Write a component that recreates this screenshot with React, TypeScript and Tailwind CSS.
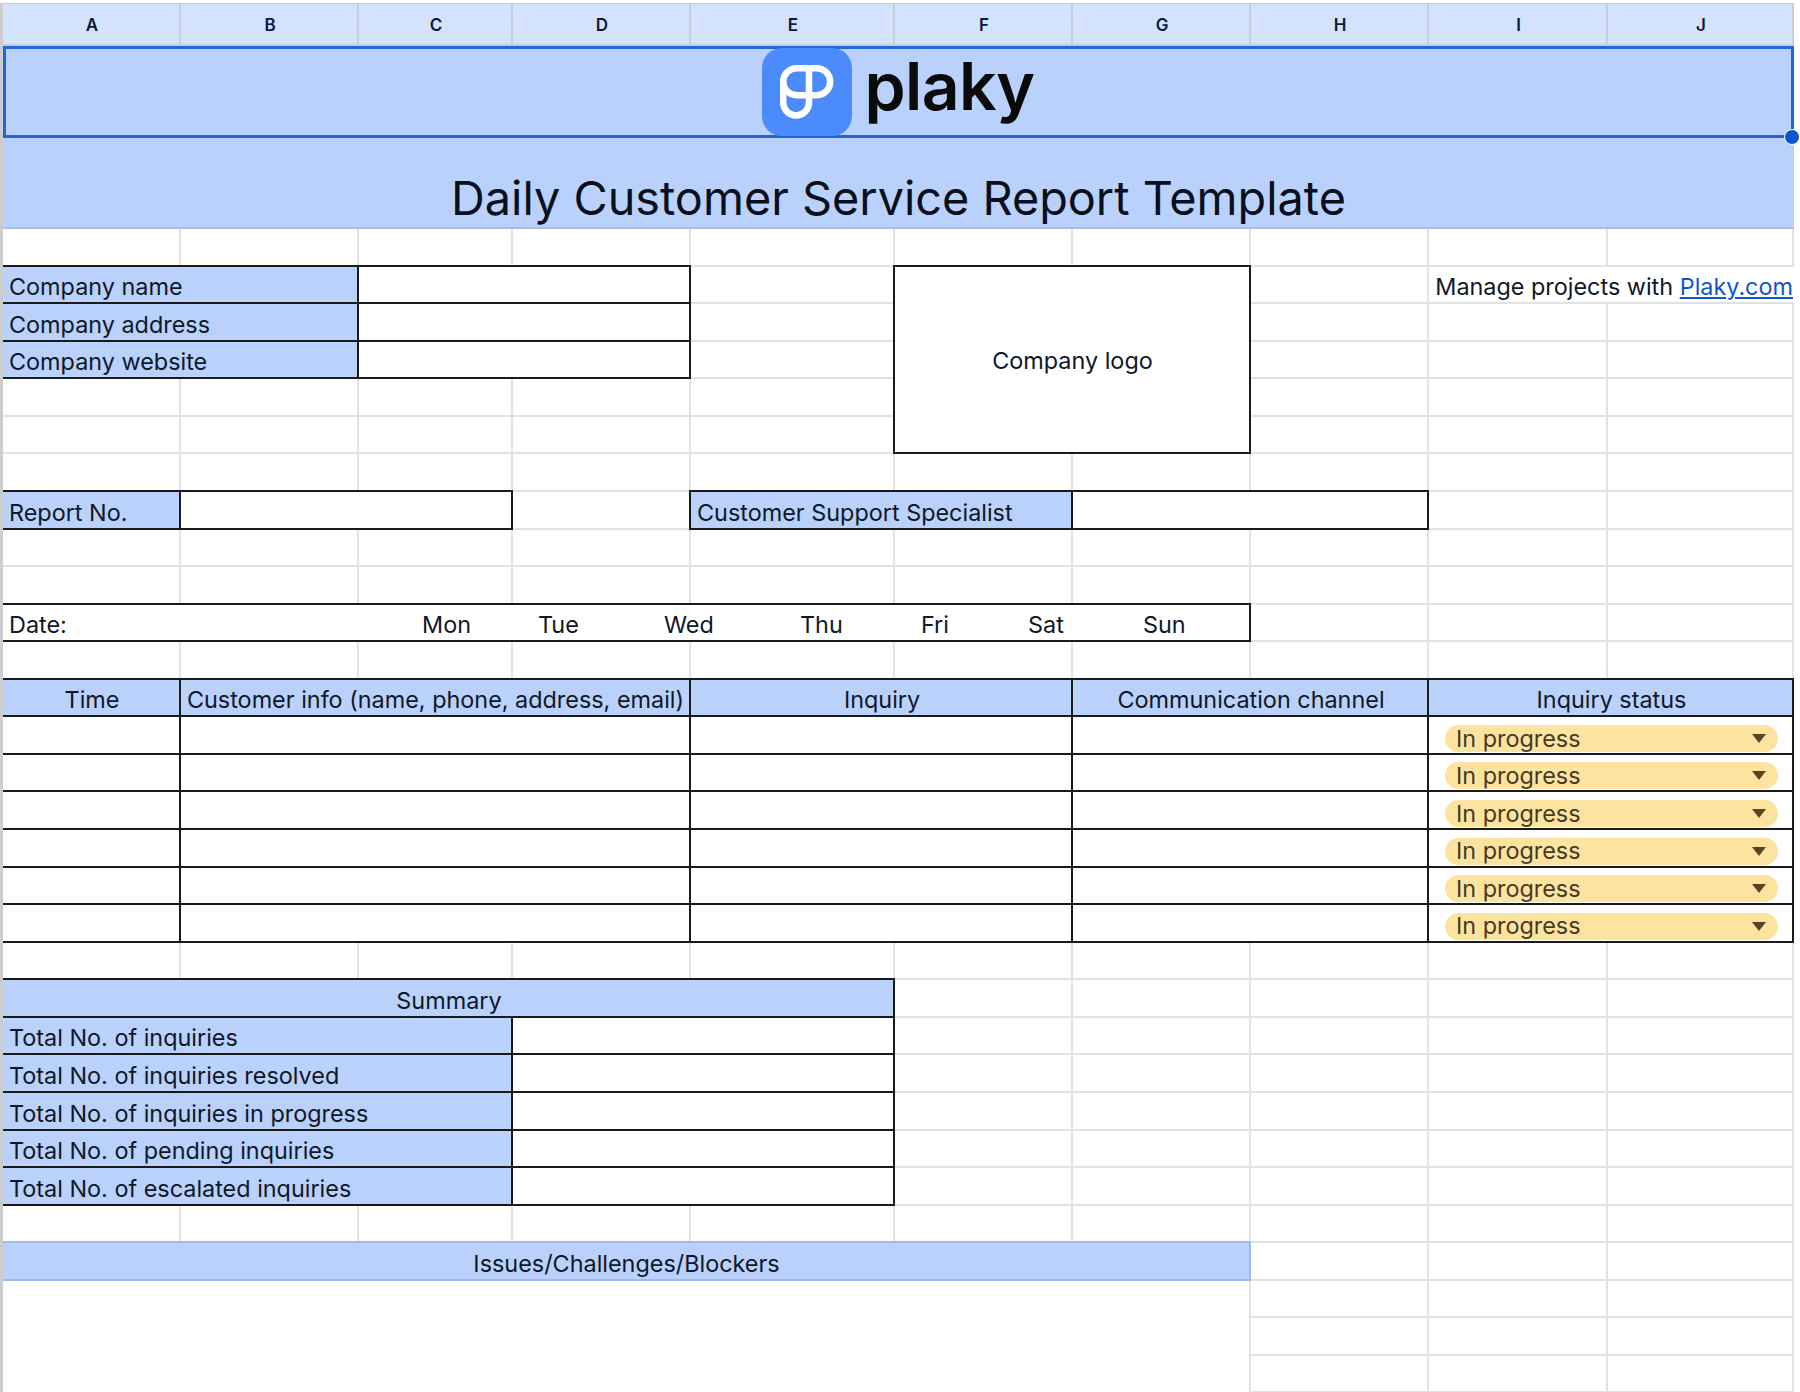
import React from "react";

type CellProps = { tone?: "grid" | "black" | "soft"; c?: string; children?: React.ReactNode };

function Cell({ tone = "grid", c = "", children }: CellProps) {
  const color = tone === "black" ? "border-[#1a1a1a]" : tone === "soft" ? "border-[#a3b9e6]" : "border-[#e2e2e2]";
  return <div className={`flex min-w-0 items-end overflow-hidden whitespace-nowrap border-r-2 border-b-2 leading-[30px] ${color} ${c}`}>{children}</div>;
}

function Blanks({ n }: { n: number }) {
  return <>{Array.from({ length: n }, (_, i) => <Cell key={i} />)}</>;
}

const blue = "bg-[#b9d1fb]";
const top = "-mt-[2px] border-t-2";

function Status() {
  return (
    <div className="col-span-2 flex min-w-0 items-end border-r-2 border-b-2 border-[#1a1a1a] pb-[1px] pl-[16px] pr-[14px]">
      <div className="flex h-[27px] flex-1 items-center justify-between rounded-full bg-[#fde3a0] pl-[11px] pr-[12px] text-[#473a22]">
        <span className="leading-none">In progress</span>
        <svg width="14" height="9" viewBox="0 0 14 9"><path d="M0 0h14L7 9z" fill="#5a4523" /></svg>
      </div>
    </div>
  );
}

function LogoMark() {
  return (
    <div className="flex h-[88px] w-[90px] items-center justify-center rounded-[20px] bg-[#4c8bfb]">
      <svg width="54" height="54" viewBox="0 0 54 54" fill="none" stroke="#fff" strokeWidth="6.5">
        <rect x="3.2" y="3.2" width="47" height="27" rx="13.5" />
        <path d="M3.2 16.7V37.5a12.9 12.9 0 0 0 25.8 0V3.2" />
      </svg>
    </div>
  );
}

export default function App() {
  return (
    <div className="h-[1392px] w-[1800px] overflow-hidden bg-white pt-[3px] font-['Inter','Liberation_Sans',sans-serif] text-[23.4px] text-[#101828]">
      <div className="grid h-[1389px] w-[1794px] grid-cols-[178px_178px_154px_178px_204px_178px_178px_178px_179px_186px] grid-rows-[42px_92px_91px_repeat(31,37.57px)] border-t border-l-[3px] border-[#cdcdcd]">
        {"ABCDEFGHIJ".split("").map((l) => (
          <div key={l} className="flex items-center justify-center border-r-2 border-b-2 border-[#c9ced6] bg-[#d3e3fd] pl-[2px] pt-[3px] text-[17px] font-semibold text-[#0b1a3a]">{l}</div>
        ))}

        <div className="relative col-span-10 flex items-center justify-center gap-[12px] border-[3px] border-[#1f66d8] bg-[#b9d1fb]">
          <LogoMark />
          <span className="pb-[12px] text-[66px] font-semibold leading-none tracking-[-0.6px] text-[#0a0a0a]">plaky</span>
          <div className="absolute -bottom-[10px] -right-[9px] h-[16px] w-[16px] rounded-full border border-white bg-[#0b57d0]" />
        </div>
        <div className="col-span-10 flex items-end justify-center border-b-2 border-[#a9bde6] bg-[#b9d1fb] text-[46.8px] leading-[58px] text-[#0a0f1c]">
          Daily Customer Service Report Template
        </div>

        <Blanks n={10} />

        {/* Company info */}
        <Cell tone="black" c={`col-span-2 pl-[6px] ${blue} ${top}`}>Company name</Cell>
        <Cell tone="black" c={`col-span-2 ${top}`} />
        <Cell />
        <div className="relative z-10 col-span-2 row-span-5 -mt-[2px] -ml-[2px] flex items-center justify-center border-2 border-[#1a1a1a] pl-[1px] pt-[3px]">Company logo</div>
        <Cell />
        <div className="col-span-2 flex items-end justify-end whitespace-nowrap border-b-2 border-[#e2e2e2] pr-[1px] leading-[30px]">
          <span>Manage projects with&nbsp;</span><a className="text-[#1155cc] underline">Plaky.com</a>
        </div>

        <Cell tone="black" c={`col-span-2 pl-[6px] ${blue}`}>Company address</Cell>
        <Cell tone="black" c="col-span-2" />
        <Blanks n={4} />
        <Cell tone="black" c={`col-span-2 pl-[6px] ${blue}`}>Company website</Cell>
        <Cell tone="black" c="col-span-2" />
        <Blanks n={4} />
        <Blanks n={8} />
        <Blanks n={8} />
        <Blanks n={10} />

        {/* Report */}
        <Cell tone="black" c={`pl-[6px] ${blue} ${top}`}>Report No.</Cell>
        <Cell tone="black" c={`col-span-2 ${top}`} />
        <Cell />
        <Cell tone="black" c={`col-span-2 -ml-[2px] border-l-2 pl-[6px] ${blue} ${top}`}>Customer Support Specialist</Cell>
        <Cell tone="black" c={`col-span-2 ${top}`} />
        <Blanks n={2} />
        <Blanks n={10} />
        <Blanks n={10} />

        {/* Date */}
        <Cell tone="black" c={`col-span-7 pl-[6px] ${top}`}>
          <span className="w-[413px]">Date:</span>
          <span className="w-[116px]">Mon</span>
          <span className="w-[126px]">Tue</span>
          <span className="w-[136px]">Wed</span>
          <span className="w-[121px]">Thu</span>
          <span className="w-[107px]">Fri</span>
          <span className="w-[115px]">Sat</span>
          <span>Sun</span>
        </Cell>
        <Blanks n={3} />
        <Blanks n={10} />

        {/* Main table */}
        <Cell tone="black" c={`items-center justify-center pl-[2px] pt-[3px] ${blue} ${top}`}>Time</Cell>
        <Cell tone="black" c={`col-span-3 justify-center pl-[1px] ${blue} ${top}`}>Customer info (name, phone, address, email)</Cell>
        <Cell tone="black" c={`col-span-2 justify-center pl-[2px] ${blue} ${top}`}>Inquiry</Cell>
        <Cell tone="black" c={`col-span-2 justify-center pl-[2px] ${blue} ${top}`}>Communication channel</Cell>
        <Cell tone="black" c={`col-span-2 justify-center pl-[2px] ${blue} ${top}`}>Inquiry status</Cell>
        {[0, 1, 2, 3, 4, 5].map((i) => (
          <div key={i} className="contents">
            <Cell tone="black" />
            <Cell tone="black" c="col-span-3" />
            <Cell tone="black" c="col-span-2" />
            <Cell tone="black" c="col-span-2" />
            <Status />
          </div>
        ))}
        <Blanks n={10} />

        {/* Summary */}
        <Cell tone="black" c={`col-span-5 justify-center pl-[2px] ${blue} ${top}`}>Summary</Cell>
        <Blanks n={5} />
        {["Total No. of inquiries", "Total No. of inquiries resolved", "Total No. of inquiries in progress", "Total No. of pending inquiries", "Total No. of escalated inquiries"].map((t) => (
          <div key={t} className="contents">
            <Cell tone="black" c={`col-span-3 pl-[6px] ${blue}`}>{t}</Cell>
            <Cell tone="black" c="col-span-2" />
            <Blanks n={5} />
          </div>
        ))}
        <Blanks n={10} />

        {/* Issues */}
        <Cell tone="soft" c={`col-span-7 justify-center pl-[1px] ${blue} ${top}`}>Issues/Challenges/Blockers</Cell>
        <Blanks n={3} />
        <div className="col-span-7 row-span-3 border-r-2 border-[#e2e2e2]" />
        <Blanks n={9} />
      </div>
    </div>
  );
}
